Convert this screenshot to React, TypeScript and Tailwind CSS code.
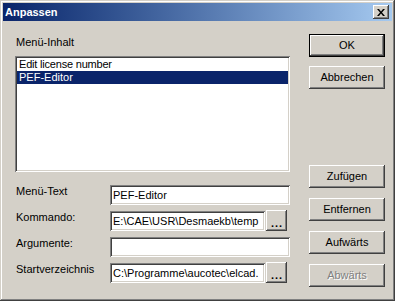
import React from "react";

const raised =
  "shadow-[inset_-1px_-1px_#404040,inset_1px_1px_#ffffff,inset_-2px_-2px_#808080,inset_2px_2px_#d4d0c8]";
const sunken =
  "shadow-[inset_1px_1px_#808080,inset_-1px_-1px_#ffffff,inset_2px_2px_#404040,inset_-2px_-2px_#d4d0c8]";

function Btn({ label, disabled = false, isDefault = false }: { label: string; disabled?: boolean; isDefault?: boolean }) {
  if (isDefault) {
    return (
      <div className="h-[23px] w-[76px] border border-black flex">
        <div className={`flex-1 flex items-center justify-center bg-[#d4d0c8] ${raised}`}>{label}</div>
      </div>
    );
  }
  return (
    <div
      className={`h-[23px] w-[76px] flex items-center justify-center bg-[#d4d0c8] ${raised} ${
        disabled ? "text-[#808080] [text-shadow:1px_1px_0_#ffffff]" : "text-black"
      }`}
    >
      {label}
    </div>
  );
}

function Field({ value, width }: { value: string; width: string }) {
  return (
    <div className={`h-[20px] ${width} bg-white ${sunken} p-[2px] flex`}>
      <div className="flex-1 overflow-hidden flex items-center">
        <span className="pl-[1px] whitespace-nowrap">{value}</span>
      </div>
    </div>
  );
}

function Dots() {
  return (
    <div className={`h-[21px] w-[21px] -mt-[1px] ml-[1px] bg-[#d4d0c8] ${raised} flex items-end justify-center pb-[5px]`}>
      <span className="font-bold leading-[6px] tracking-[1px] pl-[1px]">...</span>
    </div>
  );
}

export default function App() {
  return (
    <div className="w-[395px] h-[301px] bg-[#d4d0c8] shadow-[inset_-1px_-1px_#404040,inset_1px_1px_#d4d0c8,inset_-2px_-2px_#808080,inset_2px_2px_#ffffff] p-[3px] flex flex-col text-[11px] leading-[13px] text-black font-['Liberation_Sans',Arial,sans-serif] select-none">
      <div className="h-[18px] flex items-center justify-between bg-gradient-to-r from-[#0a246a] to-[#a6caf0] pl-[2px] pr-[3px]">
        <span className="font-bold text-white">Anpassen</span>
        <div className={`h-[14px] w-[16px] bg-[#d4d0c8] ${raised} flex items-center justify-center`}>
          <svg width="8" height="7" viewBox="0 0 8 7" className="ml-[-1px]">
            <path d="M0 0h2l2 2.5L6 0h2L5 3.5L8 7H6L4 4.5L2 7H0l3-3.5z" fill="#000" />
          </svg>
        </div>
      </div>
      <div className="flex pl-[12px]">
        <div className="w-[275px] flex flex-col pt-[15px]">
          <div className="pl-[1px]">Menü-Inhalt</div>
          <div className={`mt-[7px] h-[116px] bg-white ${sunken} p-[2px] flex flex-col`}>
            <div className="h-[13px] pl-[2px] whitespace-nowrap tracking-[-0.2px]">Edit license number</div>
            <div className="h-[13px] pl-[2px] bg-[#0a246a] text-white whitespace-nowrap">PEF-Editor</div>
          </div>
          <div className="mt-[13px] flex flex-col gap-[6px]">
            <div className="flex items-start">
              <div className="w-[95px] pl-[1px]">Menü-Text</div>
              <Field value="PEF-Editor" width="w-[180px]" />
            </div>
            <div className="flex items-start">
              <div className="w-[95px] pl-[1px]">Kommando:</div>
              <Field value="E:\CAE\USR\Desmaekb\temp" width="w-[155px]" />
              <Dots />
            </div>
            <div className="flex items-start">
              <div className="w-[95px] pl-[1px]">Argumente:</div>
              <Field value="" width="w-[180px]" />
            </div>
            <div className="flex items-start">
              <div className="w-[95px] pl-[1px]">Startverzeichnis</div>
              <Field value="C:\Programme\aucotec\elcad." width="w-[155px]" />
              <Dots />
            </div>
          </div>
        </div>
        <div className="ml-[19px] flex flex-col pt-[13px]">
          <Btn label="OK" isDefault />
          <div className="mt-[9px]">
            <Btn label="Abbrechen" />
          </div>
          <div className="mt-[76px] flex flex-col gap-[10px]">
            <Btn label="Zufügen" />
            <Btn label="Entfernen" />
            <Btn label="Aufwärts" />
            <Btn label="Abwärts" disabled />
          </div>
        </div>
      </div>
    </div>
  );
}
